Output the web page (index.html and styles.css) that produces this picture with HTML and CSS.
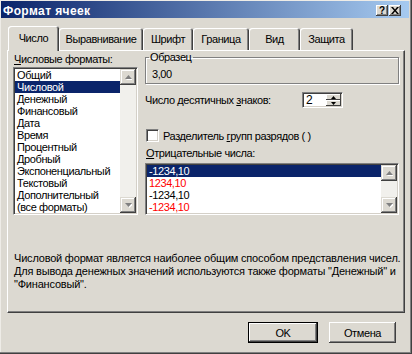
FILE: index.html
```html
<!DOCTYPE html>
<html lang="ru">
<head>
<meta charset="utf-8">
<title>Формат ячеек</title>
<link rel="stylesheet" href="styles.css">
</head>
<body>
<div class="window">
  <div class="titlebar">
    <span class="title">Формат ячеек</span>
    <div class="caption-btns">
      <span class="cap-btn help">?</span>
      <span class="cap-btn close"><svg width="8" height="7" viewBox="0 0 8 7"><path d="M0 0h2l2 2.5 2-2.5h2L5 3.5 8 7H6L4 4.5 2 7H0l3-3.5z" fill="#000"/></svg></span>
    </div>
  </div>
  <div class="tabs">
    <div class="tab active">Число</div>
    <div class="tab">Выравнивание</div>
    <div class="tab">Шрифт</div>
    <div class="tab">Граница</div>
    <div class="tab">Вид</div>
    <div class="tab">Защита</div>
  </div>
  <div class="panel">
    <div class="cols">
      <div class="col-left">
        <div class="label"><u>Ч</u>исловые форматы:</div>
        <div class="listbox fmt">
          <ul class="items">
            <li>Общий</li>
            <li class="sel">Числовой</li>
            <li>Денежный</li>
            <li>Финансовый</li>
            <li>Дата</li>
            <li>Время</li>
            <li>Процентный</li>
            <li>Дробный</li>
            <li>Экспоненциальный</li>
            <li>Текстовый</li>
            <li>Дополнительный</li>
            <li>(все форматы)</li>
          </ul>
          <div class="scrollbar">
            <span class="sb-btn"><svg width="7" height="5" viewBox="0 0 7 5"><path d="M4.5 1l3.5 4H1z" fill="#fff"/><path d="M3.5 0L7 4H0z" fill="#808080"/></svg></span>
            <span class="sb-track"></span>
            <span class="sb-btn"><svg width="7" height="5" viewBox="0 0 7 5"><path d="M1 1h7L4.5 5z" fill="#fff"/><path d="M0 0h7L3.5 4z" fill="#808080"/></svg></span>
          </div>
        </div>
      </div>
      <div class="col-right">
        <fieldset class="group">
          <legend>Образец</legend>
          <div class="sample">3,00</div>
        </fieldset>
        <div class="decimals">
          <span class="dec-label">Число десятичных <u>з</u>наков:</span>
          <div class="spin">
            <span class="spin-val">2</span>
            <div class="spin-btns">
              <span class="spin-btn"><svg width="5" height="3" viewBox="0 0 5 3"><path d="M2.5 0L5 3H0z" fill="#000"/></svg></span>
              <span class="spin-btn"><svg width="5" height="3" viewBox="0 0 5 3"><path d="M0 0h5L2.5 3z" fill="#000"/></svg></span>
            </div>
          </div>
        </div>
        <div class="check"><span class="box"></span><span>Разделитель <u>г</u>рупп разрядов ( )</span></div>
        <div class="label neg-label"><u>О</u>трицательные числа:</div>
        <div class="listbox neg">
          <ul class="items">
            <li class="sel">-1234,10</li>
            <li class="red">1234,10</li>
            <li>-1234,10</li>
            <li class="red">-1234,10</li>
          </ul>
          <div class="scrollbar">
            <span class="sb-btn"><svg width="7" height="5" viewBox="0 0 7 5"><path d="M4.5 1l3.5 4H1z" fill="#fff"/><path d="M3.5 0L7 4H0z" fill="#808080"/></svg></span>
            <span class="sb-track"></span>
            <span class="sb-btn"><svg width="7" height="5" viewBox="0 0 7 5"><path d="M1 1h7L4.5 5z" fill="#fff"/><path d="M0 0h7L3.5 4z" fill="#808080"/></svg></span>
          </div>
        </div>
      </div>
    </div>
    <p class="desc">Числовой формат является наиболее общим способом представления чисел.<br>Для вывода денежных значений используются также форматы "Денежный" и<br>"Финансовый".</p>
  </div>
  <div class="buttons">
    <button class="btn default">OK</button>
    <button class="btn">Отмена</button>
  </div>
</div>
</body>
</html>
```

FILE: styles.css
```css
* { box-sizing: border-box; }

body {
  margin: 0;
  font: 11px "Liberation Sans", Arial, sans-serif;
  letter-spacing: -0.4px;
  color: #000;
  background: #dcd9d1;
}

.window {
  width: 412px;
  height: 354px;
  background: #dcd9d1;
  padding: 1px 3px 3px 1px;
  display: flex;
  flex-direction: column;
  overflow: hidden;
  box-shadow: inset -1px -1px #404040, inset -2px -2px #808080, inset 1px 1px #eeece7;
}

.titlebar {
  height: 17px;
  flex: none;
  display: flex;
  align-items: center;
  justify-content: space-between;
  padding: 0 8px 0 2px;
  background: linear-gradient(to right, #0a246a, #a6caf0);
}

.title {
  color: #fff;
  font-weight: bold;
  font-size: 12px;
  letter-spacing: 0.4px;
  padding-top: 2px;
}

.caption-btns {
  display: flex;
  gap: 1px;
  padding-top: 2px;
}

.cap-btn {
  width: 12px;
  height: 11px;
  display: flex;
  align-items: center;
  justify-content: center;
  background: #dcd9d1;
  box-shadow: inset -1px -1px #404040, inset 1px 1px #fff, inset -2px -2px #808080;
  font-weight: bold;
  font-size: 10px;
  letter-spacing: 0;
  line-height: 1;
}

.tabs {
  height: 32px;
  flex: none;
  display: flex;
  align-items: flex-end;
  padding-left: 7px;
  position: relative;
  z-index: 1;
}

.tab {
  height: 22px;
  display: flex;
  align-items: center;
  justify-content: center;
  background: #dcd9d1;
  border-radius: 3px 3px 0 0;
  box-shadow: inset 1px 1px #fff, inset -1px 0 #404040, inset -2px 0 #808080;
}

.tab.active {
  height: 25px;
  margin-bottom: -1px;
  padding-bottom: 2px;
}

.tab:nth-child(1) { width: 51px; }
.tab:nth-child(2) { width: 84px; }
.tab:nth-child(3) { width: 50px; }
.tab:nth-child(4) { width: 56px; }
.tab:nth-child(5) { width: 51px; }
.tab:nth-child(6) { width: 53px; }

.panel {
  height: 263px;
  flex: none;
  margin: 0 4px 0 6px;
  border: 1px solid;
  border-color: #fff #404040 #404040 #fff;
  box-shadow: inset -1px -1px #808080;
  padding: 2px 5px 0 5px;
}

.cols {
  display: grid;
  grid-template-columns: 125px 1fr;
  column-gap: 7px;
}

.label {
  line-height: 13px;
  padding-left: 1px;
  margin-bottom: 1px;
}

.listbox {
  display: flex;
  background: #fff;
  border: 1px solid;
  border-color: #808080 #fff #fff #808080;
  box-shadow: inset 1px 1px #404040, inset -1px -1px #d4d0c8;
  padding: 1px;
}

.listbox.fmt { height: 148px; }
.listbox.neg { height: 52px; margin-top: 3px; }

.items {
  flex: 1;
  list-style: none;
  margin: 0;
  padding: 0;
}

.items li {
  height: 12px;
  line-height: 12px;
  padding-left: 2px;
  white-space: nowrap;
}

.items li.sel {
  background: #0a246a;
  color: #fff;
}

.items li.red { color: #ff0000; }

.scrollbar {
  width: 16px;
  display: flex;
  flex-direction: column;
  background: #f1f0ec;
}

.sb-btn {
  height: 16px;
  display: flex;
  align-items: center;
  justify-content: center;
  background: #dcd9d1;
  box-shadow: inset -1px -1px #404040, inset 1px 1px #dcd9d1, inset -2px -2px #808080, inset 2px 2px #fff;
}

.sb-track { flex: 1; }

.group {
  margin: -2px 0 0;
  padding: 4px 6px 2px;
  border: 1px solid #808080;
  box-shadow: inset 1px 1px #fff, 1px 1px #fff;
  min-width: 0;
}

.group legend {
  padding: 0 1px;
  margin-left: -3px;
  line-height: 13px;
}

.sample { line-height: 13px; }

.decimals {
  display: flex;
  align-items: center;
  height: 16px;
  margin-top: 8px;
}

.dec-label {
  width: 157px;
  flex: none;
}

.spin {
  width: 41px;
  height: 16px;
  display: flex;
  background: #fff;
  border: 1px solid;
  border-color: #808080 #fff #fff #808080;
  box-shadow: inset 1px 1px #404040, inset -1px -1px #d4d0c8;
  padding: 1px;
}

.spin-val {
  flex: 1;
  padding-left: 2px;
  line-height: 12px;
  font-size: 12px;
}

.spin-btns {
  width: 15px;
  display: flex;
  flex-direction: column;
}

.spin-btn {
  flex: 1;
  display: flex;
  align-items: center;
  justify-content: center;
  background: #dcd9d1;
  box-shadow: inset -1px -1px #404040, inset 1px 1px #fff;
}

.check {
  display: flex;
  align-items: center;
  gap: 4px;
  height: 13px;
  margin-top: 21px;
  padding-left: 1px;
}

.box {
  width: 13px;
  height: 13px;
  background: #fff;
  border: 1px solid;
  border-color: #808080 #fff #fff #808080;
  box-shadow: inset 1px 1px #404040, inset -1px -1px #d4d0c8;
}

.neg-label {
  margin-top: 5px;
  margin-bottom: 0;
}

.desc {
  margin: 37px 0 0;
  line-height: 13px;
  padding-left: 1px;
  white-space: nowrap;
  letter-spacing: -0.2px;
}

.buttons {
  display: flex;
  justify-content: flex-end;
  gap: 11px;
  margin-top: 9px;
  padding-right: 13px;
}

.btn {
  height: 21px;
  width: 67px;
  font: inherit;
  letter-spacing: inherit;
  color: #000;
  background: #dcd9d1;
  border: none;
  padding: 0;
  box-shadow: inset -1px -1px #404040, inset 1px 1px #fff, inset -2px -2px #808080;
}

.btn.default {
  width: 70px;
  border: 1px solid #000;
}
```
